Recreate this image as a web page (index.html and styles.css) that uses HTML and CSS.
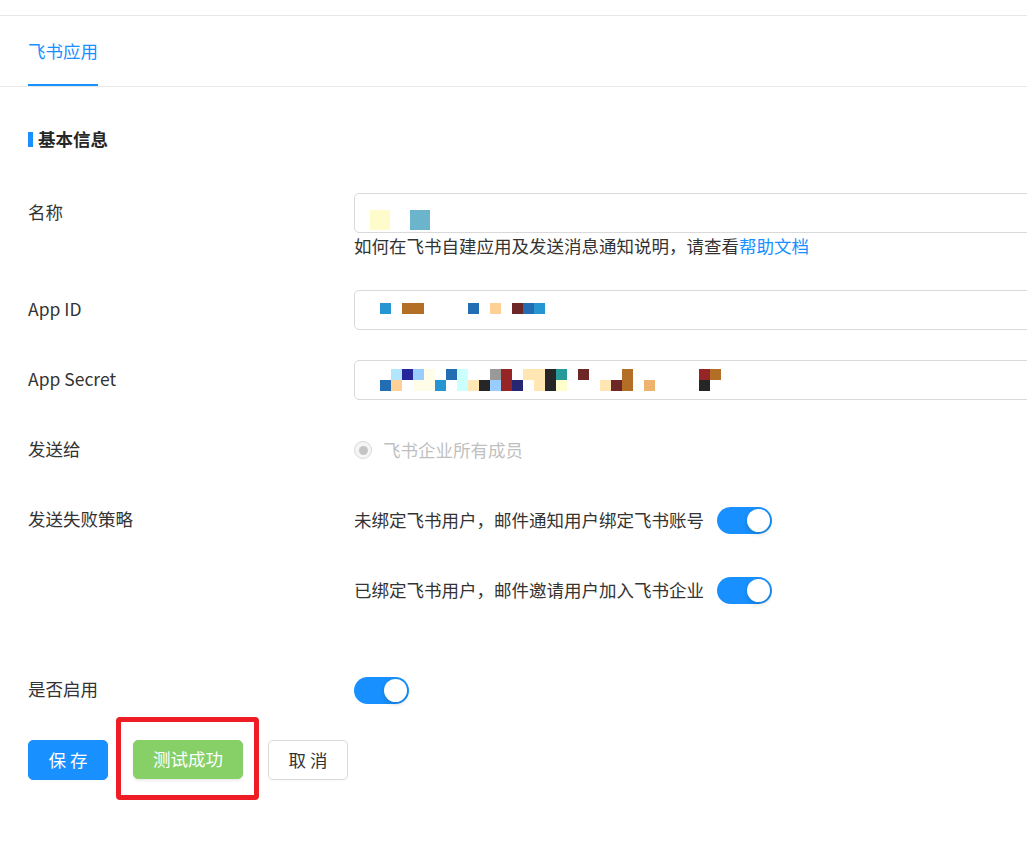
FILE: index.html
```html
<!DOCTYPE html>
<html lang="zh-CN">
<head>
<meta charset="UTF-8">
<meta name="viewport" content="width=device-width, initial-scale=1.0">
<title>飞书应用</title>
<link rel="stylesheet" href="styles.css">
</head>
<body>

<div class="top-strip"></div>

<!-- 标签栏 -->
<div class="tabs">
    <div class="tab active">飞书应用</div>
</div>

<div class="content">
    <div class="section-title"><span class="bar"></span>基本信息</div>

    <div class="form">
        <div class="row">
            <div class="label">名称</div>
            <div class="field">
                <div class="input name-input">
                    <div class="mosaic big">
                        <i class="y"></i><i></i><i class="w"></i>
                    </div>
                </div>
                <div class="help">如何在飞书自建应用及发送消息通知说明，请查看<a href="#">帮助文档</a></div>
            </div>
        </div>

        <div class="row">
            <div class="label">App ID</div>
            <div class="field">
                <div class="input id-input">
                    <div class="mosaic">
                        <i class="a"></i><i></i><i class="b"></i><i class="b"></i><i></i><i></i><i></i><i></i>
                        <i class="c"></i><i></i><i class="d"></i><i></i><i class="e"></i><i class="c"></i><i class="a"></i>
                    </div>
                </div>
            </div>
        </div>

        <div class="row">
            <div class="label">App Secret</div>
            <div class="field">
                <div class="input secret-input">
                    <div class="mosaic">
                        <i></i><i class="f"></i><i class="g"></i><i class="h"></i><i class="k"></i><i></i><i class="c"></i><i class="m"></i>
                        <i></i><i></i><i class="n"></i><i class="p"></i><i></i><i class="q"></i><i class="q"></i><i class="r"></i>
                        <i class="s"></i><i></i><i class="e"></i><i></i><i></i><i></i><i class="b"></i><i></i>
                        <i></i><i></i><i></i><i></i><i></i><i class="p"></i><i class="b"></i>

                        <i class="c"></i><i class="d"></i><i></i><i class="k"></i><i class="k"></i><i class="a"></i><i></i><i class="m"></i>
                        <i class="q"></i><i class="r"></i><i class="h"></i><i class="p"></i><i class="t"></i><i></i><i class="q"></i><i class="r"></i>
                        <i class="u"></i><i></i><i></i><i></i><i class="q"></i><i class="e"></i><i class="b"></i><i></i>
                        <i class="v"></i><i></i><i></i><i></i><i></i><i class="r"></i><i></i>
                    </div>
                </div>
            </div>
        </div>

        <div class="row">
            <div class="label">发送给</div>
            <div class="field">
                <label class="radio disabled">
                    <span class="radio-dot"></span>
                    飞书企业所有成员
                </label>
            </div>
        </div>

        <div class="row">
            <div class="label">发送失败策略</div>
            <div class="field stack">
                <div class="switch-line">
                    <span>未绑定飞书用户，邮件通知用户绑定飞书账号</span>
                    <span class="switch on"></span>
                </div>
                <div class="switch-line">
                    <span>已绑定飞书用户，邮件邀请用户加入飞书企业</span>
                    <span class="switch on"></span>
                </div>
            </div>
        </div>

        <div class="row enable-row">
            <div class="label">是否启用</div>
            <div class="field">
                <div class="switch-line">
                    <span class="switch on"></span>
                </div>
            </div>
        </div>

        <div class="actions">
            <button class="btn primary">保 存</button>
            <span class="marked">
                <button class="btn success">测试成功</button>
                <span class="mark"></span>
            </span>
            <button class="btn">取 消</button>
        </div>
    </div>
</div>

</body>
</html>
```

FILE: styles.css
```css
html, body {
    min-height: 100%;
}
body {
    margin: 0;
    font-family: "Noto Sans CJK SC", "Noto Sans", sans-serif;
    font-size: 17.5px;
    color: #333;
    background: #fff;
    overflow: hidden;
}

.top-strip {
    height: 15px;
    border-bottom: 1px solid #e8e8e8;
}

/* 标签栏 */
.tabs {
    display: flex;
    padding-left: 28px;
    border-bottom: 1px solid #e8e8e8;
}
.tab {
    padding: 23px 0 21px;
    line-height: 24px;
    border-bottom: 2px solid transparent;
}
.tab.active {
    color: #1890ff;
    border-bottom-color: #1890ff;
}

.content {
    padding: 40px 0 70px 28px;
}

.section-title {
    display: flex;
    align-items: center;
    gap: 5px;
    font-weight: bold;
    line-height: 24px;
    color: #262626;
}
.section-title .bar {
    width: 5px;
    height: 15px;
    background: #1890ff;
}

/* 表单 */
.form {
    display: flex;
    flex-direction: column;
    gap: 30px;
    margin-top: 42px;
}
.row {
    display: flex;
}
.label {
    width: 326px;
    flex-shrink: 0;
    line-height: 38px;
}
.field {
    flex: 1;
}
.field.stack {
    display: flex;
    flex-direction: column;
    gap: 30px;
}
.enable-row {
    margin-top: 30px;
}

.input {
    width: 720px;
    height: 40px;
    box-sizing: border-box;
    border: 1px solid #d9d9d9;
    border-radius: 5px;
    background: #fff;
}
.name-input { padding: 16px 0 0 15px; }
.id-input { padding: 12px 0 0 25px; }
.secret-input { padding: 8px 0 0 25px; }

.help {
    line-height: 25px;
    padding-bottom: 2px;
    color: #333;
}
.help a {
    color: #1890ff;
    text-decoration: none;
}

/* 打码 */
.mosaic {
    display: grid;
    grid-template-columns: repeat(31, 11px);
    grid-auto-rows: 11px;
}
.mosaic.big {
    grid-template-columns: repeat(3, 20px);
    grid-auto-rows: 20px;
}
.mosaic i { display: block; }
.mosaic .a { background: #2596d1; }
.mosaic .b { background: #b36f26; }
.mosaic .c { background: #236db3; }
.mosaic .d { background: #ffd096; }
.mosaic .e { background: #6e2727; }
.mosaic .f { background: #b3e5fc; }
.mosaic .g { background: #262699; }
.mosaic .h { background: #99ccff; }
.mosaic .k { background: #fffde7; }
.mosaic .m { background: #ccffff; }
.mosaic .n { background: #999999; }
.mosaic .p { background: #962626; }
.mosaic .q { background: #ffe6b3; }
.mosaic .r { background: #262626; }
.mosaic .s { background: #269999; }
.mosaic .t { background: #262673; }
.mosaic .u { background: #ffffcc; }
.mosaic .v { background: #eeb46e; }
.mosaic .y { background: #fffccc; }
.mosaic .w { background: #6cb4cc; }

/* 单选 */
.radio {
    display: flex;
    align-items: center;
    gap: 11px;
    height: 40px;
    line-height: 38px;
}
.radio.disabled {
    color: #bfbfbf;
}
.radio-dot {
    width: 18px;
    height: 18px;
    box-sizing: border-box;
    border: 1px solid #d9d9d9;
    border-radius: 50%;
    background: #f5f5f5;
    display: flex;
    align-items: center;
    justify-content: center;
}
.radio-dot::after {
    content: '';
    width: 9px;
    height: 9px;
    border-radius: 50%;
    background: #c4c4c4;
}

/* 开关 */
.switch-line {
    display: flex;
    align-items: center;
    gap: 13px;
    height: 40px;
    line-height: 38px;
}
.switch {
    width: 55px;
    height: 27px;
    border-radius: 14px;
    background: #bfbfbf;
    position: relative;
    flex-shrink: 0;
}
.switch.on {
    background: #1890ff;
}
.switch::after {
    content: '';
    position: absolute;
    top: 2px;
    left: 2px;
    width: 23px;
    height: 23px;
    border-radius: 50%;
    background: #fff;
    box-shadow: 0 2px 4px rgba(0, 35, 11, 0.2);
}
.switch.on::after {
    left: 30px;
}

/* 按钮 */
.actions {
    display: flex;
    align-items: flex-start;
    gap: 25px;
}
.btn {
    height: 40px;
    width: 80px;
    padding: 0 0 2px;
    border: 1px solid #d9d9d9;
    border-radius: 5px;
    background: #fff;
    color: #333;
    font-family: inherit;
    font-size: 17.5px;
    box-shadow: 0 2px 0 rgba(0, 0, 0, 0.015);
}
.btn.primary {
    background: #1890ff;
    border-color: #1890ff;
    color: #fff;
}
.marked {
    position: relative;
    display: flex;
}
.btn.success {
    width: 110px;
    height: 39px;
    background: #87d068;
    border-color: #87d068;
    color: #fff;
    box-shadow: 0 2px 3px rgba(0, 0, 0, 0.08);
}
.mark {
    position: absolute;
    top: -23px;
    left: -17px;
    right: -16px;
    bottom: -21px;
    border: 5px solid #ee1c25;
    border-radius: 4px;
}
```
